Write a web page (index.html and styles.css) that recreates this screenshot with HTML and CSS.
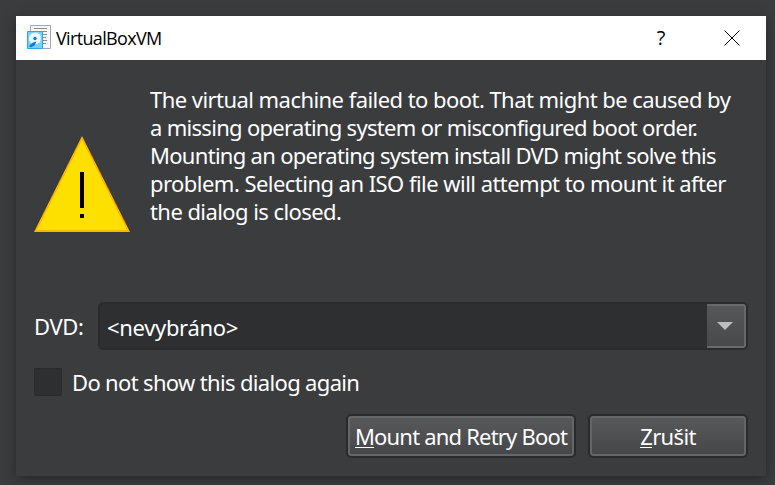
FILE: index.html
```html
<!DOCTYPE html>
<html lang="cs">
<head>
<meta charset="utf-8">
<title>VirtualBoxVM</title>
<link rel="stylesheet" href="styles.css">
</head>
<body>
<main class="dialog">
  <header class="titlebar">
    <svg class="app-icon" width="24" height="24" viewBox="0 0 24 24">
      <path d="M3.5.5h20v23h-20z" fill="#f8f8f8" stroke="#a6a6a6"/>
      <path d="M7 3.5h13M7 6.5h13M16 9.5h4M16 12.5h3M16 15.5h4M16 18.5h3" stroke="#8c8c8c" stroke-width="1.2"/>
      <path d="M.5 6.5h15v17H.5z" fill="#7ad1f8" stroke="#2ba5e8"/>
      <circle cx="8" cy="13.5" r="6" fill="#eaf7ff"/>
      <circle cx="8" cy="13.5" r="1.7" fill="#1477d4"/>
      <path d="M9.5 16.5l-3.500 1-4 3.500 1.500 1.500 4-2z" fill="#1477d4"/>
    </svg>
    <h1 class="title">VirtualBoxVM</h1>
    <span class="help">?</span>
    <svg class="close" width="16" height="16" viewBox="0 0 16 16"><path d="M.5.5l15 15M15.5.5l-15 15" stroke="#000" stroke-width="1"/></svg>
  </header>
  <section class="message">
    <svg class="warning" width="96" height="96" viewBox="0 0 96 96">
      <path d="M48 0L96 96H0z" fill="#ffb400"/>
      <path d="M48 4L93 94H3z" fill="#fde000"/>
      <path d="M46 36h4v36h-4zM46 78h4v4h-4z" fill="#000"/>
    </svg>
    <p class="text">
      <span class="line l1">The virtual machine failed to boot. That might be caused by</span>
      <span class="line l2">a missing operating system or misconfigured boot order.</span>
      <span class="line l3">Mounting an operating system install DVD might solve this</span>
      <span class="line l4">problem. Selecting an ISO file will attempt to mount it after</span>
      <span class="line l5">the dialog is closed.</span>
    </p>
  </section>
  <div class="dvd-row">
    <span class="dvd-label">DVD:</span>
    <div class="combo">
      <span class="value">&lt;nevybráno&gt;</span>
      <span class="arrow"><svg width="16" height="8" viewBox="0 0 16 8"><path d="M0 0h16L8 8z" fill="#bebebe"/></svg></span>
    </div>
  </div>
  <div class="check-row"><span class="box"></span><span class="check-label">Do not show this dialog again</span></div>
  <div class="buttons">
    <div class="button mount"><span><span class="key">M</span>ount and Retry Boot</span></div>
    <div class="button cancel"><span><span class="key">Z</span>rušit</span></div>
  </div>
</main>
</body>
</html>
```
FILE: styles.css
```css
* { box-sizing: border-box; }
body {
  margin: 0;
  height: 485px;
  padding: 16px 9px 9px 16px;
  overflow: hidden;
  background: #3b3c3e;
  font: 22px/28px "Noto Sans", sans-serif;
  color: #fff;
  white-space: nowrap;
}
.dialog {
  width: 750px;
  height: 460px;
  background: #3b3c3e;
  box-shadow: 0 3px 12px rgba(0, 0, 0, .35);
}
.titlebar {
  display: flex;
  align-items: center;
  height: 44px;
  padding: 0 26px 0 11px;
  background: #fff;
  color: #000;
}
.app-icon { margin-bottom: 2px; }
.title {
  flex: 1;
  margin: 0 0 1px 5px;
  font: 18px/24px "Open Sans", sans-serif;
  letter-spacing: -.65px;
}
.help { width: 12px; margin-right: 57px; font: 20px/24px "Open Sans", sans-serif; text-align: center; }
.close { margin-bottom: 1px; }
.message { display: flex; height: 242px; padding: 25px 0 0 18px; }
.warning { margin: 51px 20px 0 0; }
.text { margin: 0; }
.line { display: block; }
.l1 { letter-spacing: -.55px; }
.l2 { letter-spacing: -.7px; }
.l3 { letter-spacing: -.7px; }
.l4 { letter-spacing: -.54px; }
.l5 { letter-spacing: -.57px; }
.dvd-row { display: flex; align-items: center; height: 48px; padding-left: 18px; }
.dvd-label { width: 64px; letter-spacing: -.4px; }
.combo {
  display: flex;
  width: 650px;
  height: 48px;
  border: 2px solid #2a2b2d;
  border-radius: 5px;
  background: #2e2f31;
}
.value { flex: 1; padding: 9px 0 0 7px; letter-spacing: -.33px; }
.arrow {
  display: flex;
  align-items: center;
  justify-content: center;
  width: 39px;
  padding: 0 1px 1px 0;
  border: 2px solid #68696b;
  border-left: 0;
  border-radius: 0 3px 3px 0;
  background: linear-gradient(#565759, #48494b);
}
.check-row { display: flex; align-items: center; height: 28px; margin: 18px 0 0 18px; }
.box { width: 28px; height: 28px; margin-right: 10px; background: #2e2f31; border: 1px solid #2a2b2d; border-radius: 1px; }
.check-label { letter-spacing: -.66px; }
.buttons { display: flex; justify-content: flex-end; gap: 12px; margin: 18px 18px 0 0; }
.button {
  display: flex;
  align-items: center;
  justify-content: center;
  height: 44px;
  border: 2px solid #292a2c;
  border-radius: 5px;
  background: linear-gradient(#59595b, #454648);
  box-shadow: inset 0 0 0 2px #656668;
}
.mount { width: 230px; letter-spacing: -.8px; }
.cancel { width: 160px; letter-spacing: -.65px; }
.key { border-bottom: 1px solid #fff; display: inline-block; line-height: 22px; }
```
